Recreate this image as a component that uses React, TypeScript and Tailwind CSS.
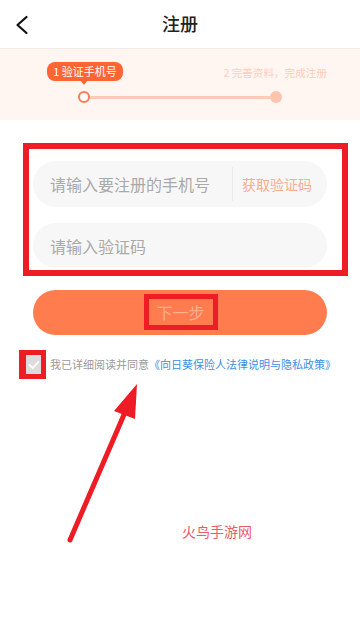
import React from "react";

const font = { fontFamily: '"Noto Sans CJK SC", "Noto Sans", sans-serif' };

export default function App() {
  return (
    <div
      className="relative w-[360px] h-[620px] bg-white overflow-hidden font-['Noto_Sans_CJK_SC',_'Noto_Sans',_sans-serif]"
      style={font}
    >
      {/* Header */}
      <div className="relative h-[49px] flex items-center justify-center border-b border-[#f0ecea]">
        <svg
          className="absolute left-[14px] top-[15px]"
          width="16"
          height="20"
          viewBox="0 0 16 20"
          fill="none"
        >
          <path d="M12.5 2 L3.5 10 L12.5 18" stroke="#111" strokeWidth="2.2" strokeLinecap="round" strokeLinejoin="round" />
        </svg>
        <span className="text-[18px] leading-none font-medium text-[#222] -mt-[2px]">注册</span>
      </div>

      {/* Steps */}
      <div className="h-[71px] bg-[#fff6f2] pt-[13px]">
        <div className="flex items-center h-[19px]">
          <div className="relative ml-[47px] h-[19px] w-[76px] rounded-[8px] bg-[#ff6533] flex items-center justify-center">
            <span className="text-[11px] leading-none text-white">1 验证手机号</span>
            <span className="absolute left-[33px] -bottom-[4px] w-0 h-0 border-l-[4px] border-r-[4px] border-t-[5px] border-l-transparent border-r-transparent border-t-[#ff6533]" />
          </div>
          <span className="ml-auto mr-[33px] text-[10.6px] leading-none text-[#ffcdbb] mt-[3px]">2 完善资料，完成注册</span>
        </div>
        <div className="flex items-center ml-[78px] w-[204px] mt-[10px] h-[12px]">
          <span className="w-[12px] h-[12px] rounded-full border-[2px] border-[#ff7a52] bg-white shrink-0" />
          <span className="flex-1 h-[3px] bg-[#ffcab6]" />
          <span className="w-[12px] h-[12px] rounded-full bg-[#ffc4ae] shrink-0" />
        </div>
      </div>

      {/* Inputs with annotation box */}
      <div className="mt-[23px] ml-[23px] w-[325px] border-[6px] border-[#ee1c25] pt-[12px] pb-[2px] pl-[4px] pr-[15px] flex flex-col gap-[16px]">
        <div className="h-[46px] rounded-full bg-[#f7f7f7] flex items-center pl-[17px]">
          <span className="text-[16px] leading-none text-[#a9a9a9] w-[182px]">请输入要注册的手机号</span>
          <span className="w-px h-[34px] bg-[#efe9e6]" />
          <span className="ml-[9px] text-[14px] leading-none text-[#ffab8e]">获取验证码</span>
        </div>
        <div className="h-[45px] rounded-full bg-[#f7f7f7] flex items-center pl-[17px]">
          <span className="text-[16px] leading-none text-[#a9a9a9]">请输入验证码</span>
        </div>
      </div>

      {/* Button */}
      <div className="mt-[14px] mx-[33px] h-[45px] rounded-full bg-[#ff7c4e] flex items-center justify-center">
        <div className="w-[74px] h-[36px] border-[5px] border-[#ee1c25] flex items-center justify-center ml-[1px] -mt-[1px]">
          <span className="text-[16px] leading-none text-[#ffae91]">下一步</span>
        </div>
      </div>

      {/* Agreement */}
      <div className="mt-[15px] flex items-center">
        <div className="ml-[19px] w-[27px] h-[29px] border-l-[7px] border-r-[5px] border-y-[5px] border-[#ee1c25] flex items-center justify-center bg-[#dcdcdc]">
          <svg width="12" height="10" viewBox="0 0 12 10" fill="none">
            <path d="M1.5 5 L4.8 8 L10.5 1.8" stroke="#ffffff" strokeWidth="1.8" strokeLinecap="round" strokeLinejoin="round" />
          </svg>
        </div>
        <span className="ml-[4px] text-[11px] leading-none text-[#9a9a9a] whitespace-nowrap">我已详细阅读并同意</span>
        <span className="text-[11px] leading-none text-[#3c8fe4] whitespace-nowrap">《向日葵保险人法律说明与隐私政策》</span>
      </div>

      {/* Annotation arrow */}
      <svg className="absolute left-0 top-0 pointer-events-none" width="360" height="620" viewBox="0 0 360 620">
        <line x1="70" y1="540" x2="126" y2="410" stroke="#ee1c25" strokeWidth="5" strokeLinecap="round" />
        <polygon points="137,384 114,411 135,419" fill="#ee1c25" />
      </svg>

      {/* Watermark */}
      <span className="absolute left-[182px] top-[524px] text-[14px] leading-none text-[#ec5a67]">火鸟手游网</span>
    </div>
  );
}
